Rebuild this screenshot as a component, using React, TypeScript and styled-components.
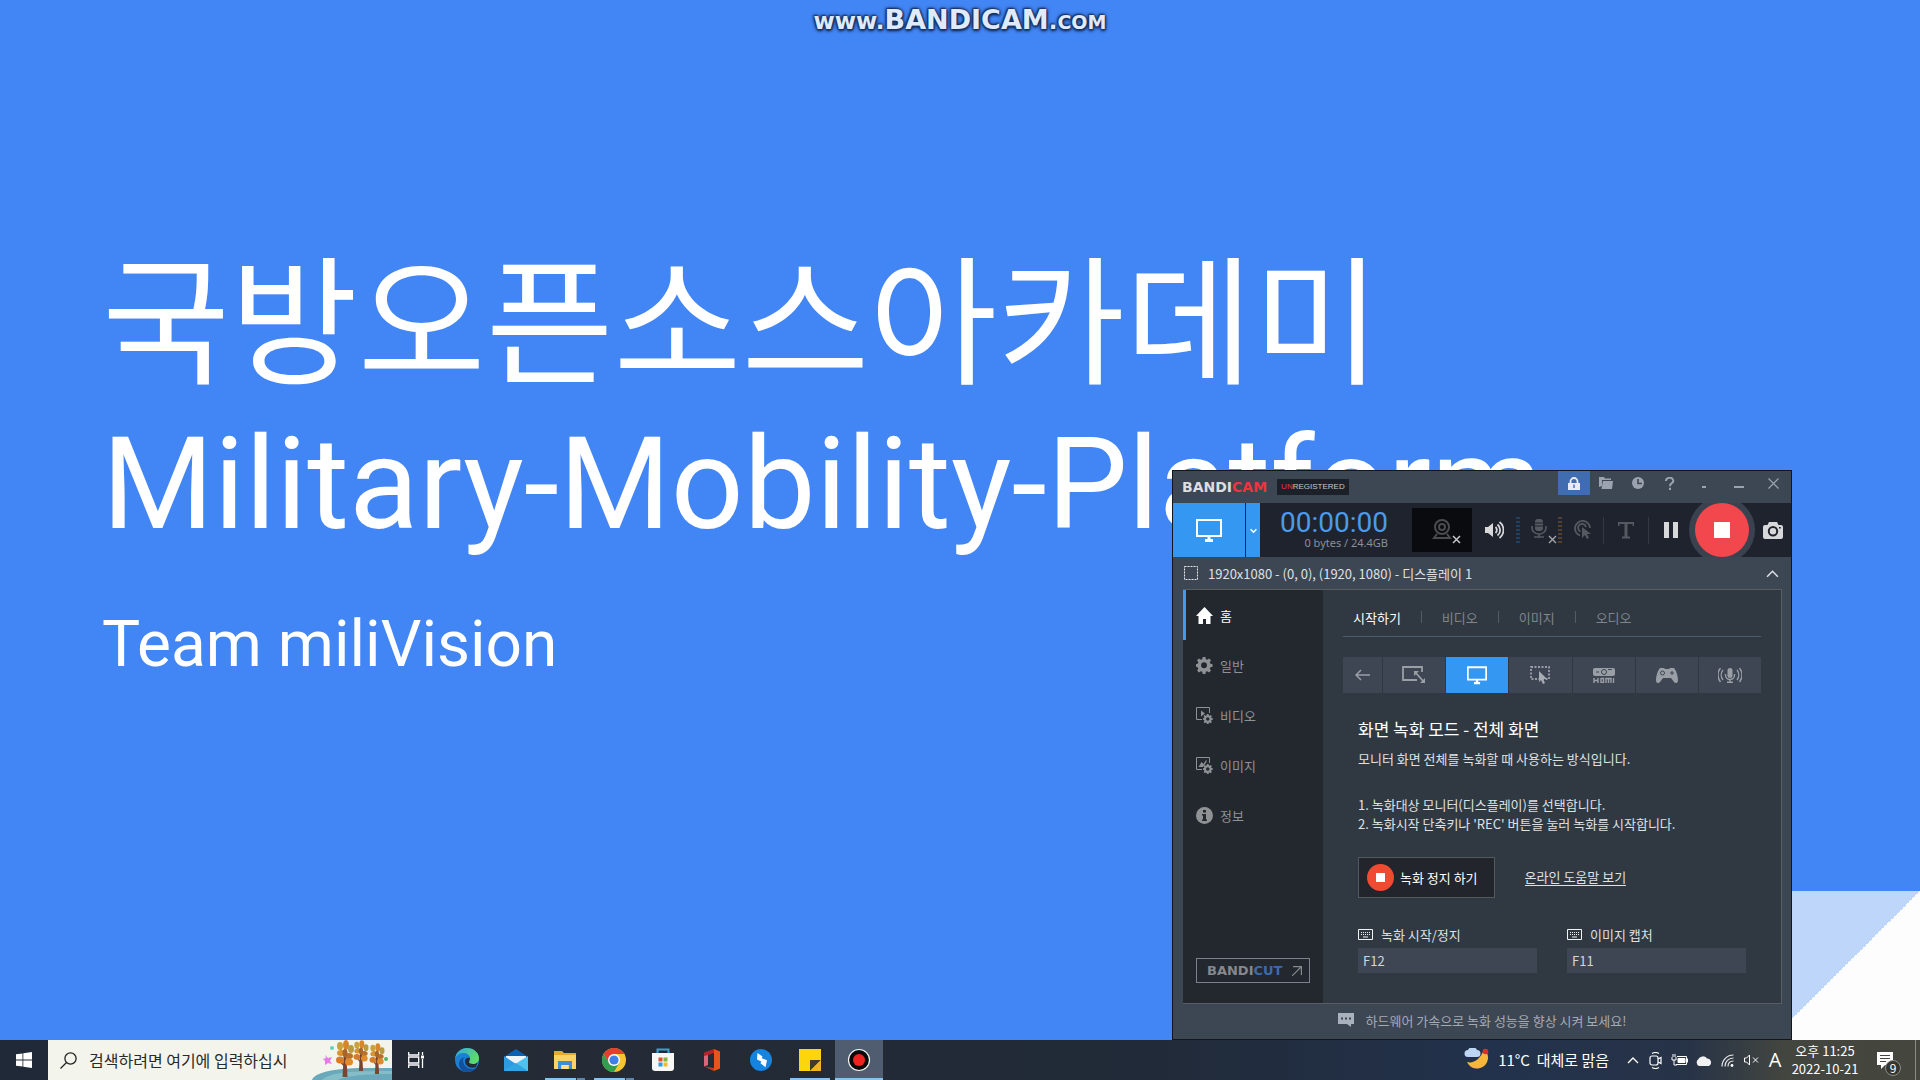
import React from 'react';
import styled, { createGlobalStyle, css } from 'styled-components';

const GlobalStyle = createGlobalStyle`
  * { box-sizing: border-box; }
  html, body { margin: 0; padding: 0; }
  body { background: #4285f4; overflow: hidden; }
  h1, h2, p, ul, ol { margin: 0; padding: 0; font-weight: 400; list-style: none; }
  button, input { font: inherit; color: inherit; border: 0; padding: 0; background: none; }
  svg { display: block; flex: none; }
`;

const koFont = `"Noto Sans CJK KR", "Open Sans", sans-serif`;
const wideFont = `"DejaVu Sans", sans-serif`;

const Screen = styled.div`
  display: flex;
  flex-direction: column;
  height: 100vh;
  font-family: ${koFont};
  font-size: 13px;
  line-height: 19px;
`;

/* ---------- desktop and slide ---------- */

const Desktop = styled.main`
  position: relative;
  flex: 1;
  min-height: 0;
  overflow: hidden;
  background: #4285f4;
`;

const Watermark = styled.div`
  position: absolute;
  top: 4px;
  left: 0;
  right: 0;
  text-align: center;
  font: bold 23px/32px ${wideFont};
  color: #dfeafc;
  text-shadow: 0 0 2px #16305f, 1px 1px 2px #16305f, -1px -1px 2px #16305f, 0 2px 3px #16305f, 0 0 4px #16305f;
`;

const WatermarkName = styled.span`
  font-size: 27px;
`;

const WatermarkDomain = styled.span`
  font-size: 19px;
  text-transform: uppercase;
`;

const Slide = styled.section`
  padding: 216px 0 0 102px;
  color: #fff;
  white-space: nowrap;
`;

const SlideTitle = styled.h1`
  font: 400 128px/150px Roboto, sans-serif;
`;

const TitleKorean = styled.span`
  display: block;
  font: 400 139px/193px ${koFont};
`;

const SlideTeam = styled.p`
  margin-top: 48px;
  font: 400 64px/76px Roboto, sans-serif;
`;

const PageFold = styled.div`
  position: absolute;
  right: 0;
  bottom: -40px;
  width: 189px;
  height: 189px;
  background: linear-gradient(135deg, #bfd6fb 50%, #fdfdfe 50%);
`;

/* ---------- recorder window ---------- */

const Window = styled.section`
  position: absolute;
  right: 128px;
  bottom: 0;
  width: 620px;
  display: flex;
  flex-direction: column;
  border: 1px solid #11161f;
  background: #3d4653;
  color: #dfe1e3;
`;

const TitleBar = styled.header`
  display: flex;
  align-items: center;
  height: 32px;
  padding-left: 9px;
`;

const Brand = styled.span<{ $size: number; $color: string }>`
  font: bold ${p => p.$size}px/20px ${wideFont};
  color: ${p => p.$color};
`;

const Accent = styled.span<{ $color: string }>`
  color: ${p => p.$color};
`;

const Unregistered = styled.span`
  margin-left: 10px;
  padding: 0 4px;
  background: #1c2029;
  color: #c6c8ca;
  font: 8px/16px "Liberation Sans", sans-serif;
`;

const TitleButtons = styled.div`
  display: flex;
  align-self: flex-start;
  margin-left: auto;
`;

const TitleButton = styled.button<{ $active?: boolean; $wide?: boolean }>`
  display: grid;
  place-items: center;
  width: ${p => (p.$wide ? 35 : 32)}px;
  height: 24px;
  color: #9ba4ae;
  background: ${p => (p.$active ? '#3f6daf' : 'transparent')};
`;

const Toolbar = styled.div`
  display: flex;
  height: 54px;
  background: #1f232d;
`;

const ModeButton = styled.button<{ $arrow?: boolean }>`
  display: grid;
  place-items: center;
  width: ${p => (p.$arrow ? 14 : 72)}px;
  margin-right: ${p => (p.$arrow ? 0 : 1)}px;
  background: #3497f2;
  color: #fff;
`;

const Timer = styled.div`
  width: 128px;
  padding-top: 8px;
  text-align: right;
`;

const Clock = styled.div`
  font: 400 28px/24px Roboto, sans-serif;
  color: #4a9bea;
`;

const FileSize = styled.div`
  font: 11px/16px "Noto Sans", sans-serif;
  color: #8b8f97;
`;

const Tool = styled.button<{ $w: number; $dim?: boolean }>`
  display: grid;
  place-items: center;
  width: ${p => p.$w}px;
  color: ${p => (p.$dim ? '#555a62' : '#d6d8da')};
`;

const PauseTool = styled(Tool)`
  padding-left: 4px;
`;

const Webcam = styled(Tool)`
  height: 44px;
  margin: 5px 0 5px 24px;
  background: #0a0b0e;
`;

const Level = styled.span<{ $color: string }>`
  width: 4px;
  height: 27px;
  margin-top: 14px;
  background: repeating-linear-gradient(${p => p.$color} 0 2px, transparent 2px 4px);
`;

const ToolDivider = styled.span`
  width: 1px;
  height: 27px;
  margin-top: 14px;
  background: #343944;
`;

const SourceRow = styled.div`
  display: flex;
  align-items: center;
  height: 32px;
  padding: 0 12px 0 11px;
  gap: 10px;
`;

const SourceText = styled.span`
  flex: 1;
  font-size: 13px;
`;

const Body = styled.div`
  display: flex;
  margin: 0 9px 0 10px;
  height: 415px;
  border: solid #5a5e60;
  border-width: 1px 1px 1px 0;
`;

const Sidebar = styled.nav`
  display: flex;
  flex-direction: column;
  justify-content: space-between;
  width: 140px;
  background: #23272e;
  padding-bottom: 20px;
`;

const SideItem = styled.button<{ $active?: boolean }>`
  display: flex;
  align-items: center;
  gap: 7px;
  width: 100%;
  height: 50px;
  padding-left: 10px;
  border-left: 3px solid ${p => (p.$active ? '#3f9bf0' : 'transparent')};
  color: ${p => (p.$active ? '#fff' : '#8f9295')};
`;

const Bandicut = styled.a`
  display: flex;
  align-items: center;
  justify-content: space-between;
  height: 25px;
  margin: 0 13px;
  padding: 0 7px 0 10px;
  border: 1px solid #7e8189;
  color: #85888f;
  text-decoration: none;
`;

const Content = styled.div`
  flex: 1;
  padding: 8px 20px 0;
  background: #303842;
`;

const Tabs = styled.div`
  display: flex;
  align-items: center;
  height: 39px;
  padding-left: 10px;
  border-bottom: 1px solid #4d5b70;
`;

const Tab = styled.button<{ $active?: boolean }>`
  display: flex;
  align-items: center;
  color: ${p => (p.$active ? '#fff' : '#7f858b')};
  &:not(:first-child)::before {
    content: '';
    width: 1px;
    height: 12px;
    margin: 0 20px;
    background: #525b66;
  }
`;

const Modes = styled.div`
  display: flex;
  gap: 1px;
  height: 36px;
  margin-top: 20px;
`;

const Mode = styled.button<{ $active?: boolean; $back?: boolean }>`
  display: grid;
  place-items: center;
  ${p => (p.$back ? css`width: 39px;` : css`flex: 1;`)}
  background: ${p => (p.$active ? '#3497f2' : '#3e4654')};
  color: ${p => (p.$active ? '#fff' : '#9a9fa6')};
`;

const Copy = styled.div`
  padding: 24px 15px 0;
`;

const ModeTitle = styled.h2`
  font-size: 17px;
  line-height: 24px;
  color: #fff;
`;

const Description = styled.p`
  margin-top: 8px;
`;

const Steps = styled.ol`
  margin-top: 27px;
`;

const Actions = styled.div`
  display: flex;
  align-items: center;
  gap: 30px;
  margin-top: 24px;
`;

const StopButton = styled.button`
  display: flex;
  align-items: center;
  gap: 6px;
  height: 41px;
  padding: 0 16px 0 8px;
  border: 1px solid #515b5c;
  background: #22262c;
  color: #fff;
`;

const HelpLink = styled.a`
  color: #dfe1e3;
  text-decoration: none;
  border-bottom: 1px solid #dfe1e3;
  line-height: 16px;
`;

const Hotkeys = styled.div`
  display: grid;
  grid-template-columns: 1fr 1fr;
  gap: 30px;
  margin-top: 26px;
`;

const HotkeyLabel = styled.label`
  display: flex;
  align-items: center;
  gap: 8px;
  height: 20px;
`;

const HotkeyInput = styled.input`
  width: 100%;
  height: 25px;
  margin-top: 4px;
  padding: 0 5px;
  background: #3e4654;
  color: #d3d6d9;
  outline: none;
`;

const Tip = styled.footer`
  display: flex;
  align-items: center;
  justify-content: center;
  gap: 12px;
  height: 35px;
  padding-bottom: 3px;
  color: #a4aab2;
`;

/* ---------- taskbar ---------- */

const Taskbar = styled.footer`
  display: flex;
  height: 40px;
  background: linear-gradient(90deg, #1f2937 0%, #242b35 25%, #212a38 60%, #22324c 78%, #273347 88%, #43463f 93%, #45463e 100%);
  color: #fff;
`;

const StartButton = styled.button`
  display: grid;
  place-items: center;
  width: 48px;
`;

const Search = styled.label`
  display: flex;
  align-items: center;
  width: 344px;
  padding-left: 12px;
  gap: 12px;
  background: #f3f4ec;
  color: #1e1e1e;
`;

const SearchInput = styled.input`
  flex: 1;
  min-width: 0;
  font-size: 16px;
  outline: none;
  &::placeholder { color: #2a2a2a; opacity: 1; }
`;

const Apps = styled.div`
  display: flex;
  gap: 1px;
  margin-left: 3px;
`;

const AppButton = styled.button<{ $state?: 'open' | 'stack' | 'active' }>`
  display: grid;
  place-items: center;
  width: 48px;
  border-bottom: 2px solid transparent;
  border-top: 2px solid transparent;
  ${p => p.$state === 'active' && css`
    background: #505d70;
    border-color: #505d70 transparent #86c3ee;
  `}
  ${p => p.$state === 'open' && css`
    background: linear-gradient(#86c3ee, #86c3ee) 4px 100% / 40px 2px no-repeat border-box;
  `}
  ${p => p.$state === 'stack' && css`
    background:
      linear-gradient(#86c3ee, #86c3ee) 4px 100% / 31px 2px no-repeat border-box,
      linear-gradient(#5f86a8, #5f86a8) 36px 100% / 8px 2px no-repeat border-box;
  `}
`;

const Tray = styled.div`
  display: flex;
  align-items: center;
  margin-left: auto;
  padding-right: 8px;
  border-right: 1px solid #8a8b86;
  margin-right: 4px;
`;

const Weather = styled.button`
  display: flex;
  align-items: center;
  gap: 8px;
  margin-right: 14px;
  font-size: 15px;
  line-height: 20px;
  white-space: nowrap;
`;

const TrayButton = styled.button<{ $w?: number }>`
  display: grid;
  place-items: center;
  width: ${p => p.$w ?? 24}px;
  height: 40px;
`;

const Ime = styled.span`
  font: 20px/24px "Open Sans", sans-serif;
`;

const DateTime = styled.time`
  width: 76px;
  text-align: center;
  font-size: 13px;
  line-height: 18px;
`;

const Notifications = styled.button`
  position: relative;
  display: grid;
  place-items: center;
  width: 44px;
  height: 40px;
`;

const Badge = styled.span`
  position: absolute;
  left: 22px;
  top: 20px;
  width: 16px;
  height: 16px;
  border-radius: 8px;
  border: 1px solid #8d8e8a;
  background: #34352f;
  font-size: 12px;
  line-height: 14px;
`;

/* ---------- icons ---------- */

const Monitor = ({ w, sw = 2 }: { w: number; sw?: number }) => (
  <svg width={w} height={w} viewBox="0 0 26 26" fill="none" stroke="#fff" strokeWidth={sw}>
    <path d="M1 3h24v16H1z" />
    <path d="M9 23.500h8M13 19v4" strokeWidth="3" />
  </svg>
);

const Chevron = ({ up, w = 12, sw = 1.4 }: { up?: boolean; w?: number; sw?: number }) => (
  <svg width={w} height={w} viewBox="0 0 12 12" fill="none" stroke="currentColor" strokeWidth={sw}>
    <path d={up ? 'M1 9l5-5 5 5' : 'M1 4l5 5 5-5'} />
  </svg>
);

const StopDisc = () => (
  <svg width="27" height="27" viewBox="0 0 54 54">
    <circle cx="27" cy="27" r="27" fill="#f04a32" />
    <path d="M18 18h18v18H18z" fill="#fff" />
  </svg>
);

const RecIcon = () => (
  <svg width="66" height="54" viewBox="0 0 66 54">
    <circle cx="33" cy="27" r="33" fill="#3a4250" />
    <circle cx="33" cy="27" r="27" fill="#f2474c" />
    <path d="M25 19h16v16H25z" fill="#fff" />
  </svg>
);

const gearPath = 'M7.500 0h3l.5 2.400 1.600.7L14.700 1.700l2 2-1.300 2.200.7 1.600 2.400.5v3l-2.400.5-.7 1.600 1.300 2.100-2 2.100-2.100-1.400-1.600.7-.5 2.400h-3L7 16.600l-1.600-.7-2.100 1.400-2.100-2.100 1.400-2.100-.7-1.600L0 11V8l1.900-.5.7-1.600L1.200 3.700l2.100-2 2.100 1.400L7 2.400zM9 6a3.300 3.300 0 1 0 0 6.600A3.300 3.300 0 0 0 9 6z';

const Gear = () => (
  <svg width="17" height="17" viewBox="0 0 19 19" fill="currentColor" fillRule="evenodd">
    <path d={gearPath} />
  </svg>
);

const HomeIcon = () => (
  <svg width="17" height="17" viewBox="0 0 17 17" fill="currentColor">
    <path d="M8.500 0L17 9h-2.500v8H10v-5H7v5H2.500V9H0z" />
  </svg>
);

const MediaGear = ({ image }: { image?: boolean }) => (
  <svg width="17" height="17" viewBox="0 0 17 17" fill="currentColor">
    <path d="M6 12.500H.5V.5h13V6" fill="none" stroke="currentColor" />
    {image ? <path d="M2.500 10l3-5 2 2 3-4.500V5L7 10z" /> : <path d="M5 3.500L9 6.500l-4 3z" />}
    <g transform="translate(7 7) scale(.53)" fillRule="evenodd"><path d={gearPath} /></g>
  </svg>
);

const InfoIcon = () => (
  <svg width="17" height="17" viewBox="0 0 17 17">
    <circle cx="8.500" cy="8.500" r="8.500" fill="currentColor" />
    <path d="M7 3h3v2.500H7zM6 7h4v5.500h1V14H6v-1.500h1v-4H6z" fill="#23272e" />
  </svg>
);

const WebcamIcon = () => (
  <svg width="38" height="28" viewBox="0 0 38 28" fill="none" stroke="#4b4c4e" strokeWidth="2">
    <circle cx="19" cy="11" r="7" />
    <circle cx="19" cy="11" r="3" />
    <path d="M14 18l-3 4h16l-3-4" />
    <path d="M30 20l7 7M37 20l-7 7" stroke="#c4c6c8" strokeWidth="1.500" />
  </svg>
);

const SpeakerIcon = () => (
  <svg width="20" height="18" viewBox="0 0 20 18" fill="none" stroke="currentColor" strokeWidth="1.800">
    <path d="M1 6h3l5-4v14l-5-4H1z" fill="currentColor" stroke="none" />
    <path d="M11.500 6a4 4 0 0 1 0 6M13.500 3.500a7 7 0 0 1 0 11M15.500 1a10 10 0 0 1 0 16" />
  </svg>
);

const MicIcon = () => (
  <svg width="36" height="28" viewBox="-8 -2 36 28" fill="none" stroke="currentColor" strokeWidth="1.600">
    <rect x="6" y="1" width="8" height="12" rx="3" fill="currentColor" stroke="none" />
    <path d="M6 5h8M6 8h8" stroke="#1f232d" strokeWidth="1" />
    <path d="M3 8v2a7 6 0 0 0 14 0V8M10 16v3M5 19h10" />
    <path d="M20 18l7 7M27 18l-7 7" stroke="#a3a7ab" strokeWidth="1.400" />
  </svg>
);

const ClickIcon = () => (
  <svg width="18" height="20" viewBox="0 0 18 20" fill="none" stroke="currentColor" strokeWidth="1.800">
    <path d="M6 15.500A7.500 7.500 0 1 1 16 8M6.500 11.500A4 4 0 1 1 12 7" />
    <path d="M8 7l9 7h-4l2 4-2 1-2-4-3 3z" fill="currentColor" stroke="none" />
  </svg>
);

const TextIcon = () => (
  <svg width="16" height="18" viewBox="0 0 16 18" fill="none" stroke="currentColor">
    <path d="M0 2h16M4 16.500h8" strokeWidth="2" />
    <path d="M8 1v16" strokeWidth="3" />
    <path d="M.7 1v4M15.300 1v4" strokeWidth="1.400" />
  </svg>
);

const PauseIcon = () => (
  <svg width="14" height="16" viewBox="0 0 14 16" fill="currentColor"><path d="M0 0h5v16H0zM9 0h5v16H9z" /></svg>
);

const CameraIcon = () => (
  <svg width="20" height="17" viewBox="0 0 20 17" fillRule="evenodd" fill="currentColor">
    <path d="M6 0h8l1.500 3H18a2 2 0 0 1 2 2v10a2 2 0 0 1-2 2H2a2 2 0 0 1-2-2V5a2 2 0 0 1 2-2h2.500zM10 4a5.200 5.200 0 1 0 0 10.400A5.200 5.200 0 0 0 10 4zm0 2a3.200 3.200 0 1 1 0 6.400A3.200 3.200 0 0 1 10 6zM16 5v1.500h1.800V5z" />
  </svg>
);

const LockIcon = () => (
  <svg width="12" height="13" viewBox="0 0 12 13" fill="#e8ecf2">
    <path d="M0 6h12v7H0z" /><path d="M2.500 6V4.500a3.500 3.500 0 0 1 7 0V6" fill="none" stroke="#e8ecf2" strokeWidth="1.800" />
    <path d="M5.300 7.500h1.400v3.500H5.300z" fill="#3f6daf" />
  </svg>
);

const FolderIcon = () => (
  <svg width="14" height="12" viewBox="0 0 14 12" fill="currentColor">
    <path d="M0 0h5l1 1.500h6V3H3v6L0 10z" /><path d="M4 4h10l-1 8H2.500z" />
  </svg>
);

const ClockIcon = () => (
  <svg width="12" height="12" viewBox="0 0 12 12">
    <circle cx="6" cy="6" r="6" fill="currentColor" /><path d="M6 2v4.500h4" fill="none" stroke="#3d4653" strokeWidth="1.600" />
  </svg>
);

const HelpIcon = () => (
  <svg width="10" height="13" viewBox="0 0 10 13" fill="none" stroke="currentColor" strokeWidth="2">
    <path d="M1 4a3.600 3 0 1 1 5.500 2.300C5 7.300 5 8 5 9.200M5 10.800V13" />
  </svg>
);

const BarIcon = ({ w }: { w: number }) => (
  <svg width={w} height="12" viewBox={`0 0 ${w} 12`} fill="currentColor"><path d={`M0 9h${w}v2H0z`} /></svg>
);

const CloseIcon = () => (
  <svg width="11" height="11" viewBox="0 0 11 11" stroke="currentColor" strokeWidth="1.200"><path d="M.5.5l10 10M10.500.5l-10 10" /></svg>
);

const SelectionIcon = () => (
  <svg width="14" height="14" viewBox="0 0 14 14" fill="none" stroke="#e6e8ea" strokeDasharray="2 1"><path d="M.5.5h13v13H.5z" /></svg>
);

const ArrowBack = () => (
  <svg width="15" height="12" viewBox="0 0 15 12" fill="none" stroke="currentColor" strokeWidth="1.500"><path d="M15 6H1M6 1L1 6l5 5" /></svg>
);

const ResizeRect = () => (
  <svg width="24" height="18" viewBox="0 0 24 18" fill="none" stroke="currentColor" strokeWidth="1.800">
    <path d="M15 14H1V1h19v5" /><path d="M13 6l9 10" /><path d="M12 5h5l-5 5zM23 17v-5l-5 5z" fill="currentColor" stroke="none" />
  </svg>
);

const RectCursor = () => (
  <svg width="20" height="18" viewBox="0 0 20 18" fill="none" stroke="currentColor">
    <path d="M1 1h18v12H1z" strokeWidth="1.800" strokeDasharray="2 1.500" />
    <path d="M9 5l8 8h-4l2 4-2 1-2-4-2 2z" fill="#a9adb3" stroke="none" />
  </svg>
);

const HdmiIcon = () => (
  <svg width="22" height="15" viewBox="0 0 22 15" fill="currentColor">
    <path d="M2 0h18a2 2 0 0 1 2 2v4a2 2 0 0 1-2 2H2a2 2 0 0 1-2-2V2a2 2 0 0 1 2-2z" />
    <circle cx="11" cy="4" r="2.500" fill="none" stroke="#3e4654" /><path d="M15 1.500h4M3 4h3" stroke="#3e4654" />
    <path d="M1 10v5M5 10v5M1 12.500h4M8 10v5M8 10.500h2.500v4H8M13 15v-4.500h5V15M15.500 10.500V15M20.500 10v5" fill="none" stroke="currentColor" strokeWidth="1.400" />
  </svg>
);

const GamepadIcon = () => (
  <svg width="22" height="15" viewBox="0 0 22 15" fill="currentColor">
    <path d="M4 0h4l1 1h4l1-1h4c2 2 4 8 4 12 0 3-2 4-4 2l-3-4H7l-3 4c-2 2-4 1-4-2C0 8 2 2 4 0z" />
    <circle cx="6.500" cy="5" r="2" fill="none" stroke="#3e4654" /><path d="M14 5h4M16 3v4" stroke="#3e4654" />
  </svg>
);

const AudioIcon = () => (
  <svg width="24" height="15" viewBox="0 0 24 15" fill="none" stroke="currentColor" strokeWidth="1.400">
    <rect x="9.500" y="0" width="5" height="10" rx="2.500" fill="currentColor" stroke="none" />
    <path d="M7.500 6v1a4.500 4.500 0 0 0 9 0V6M12 11.500V14M9 14.300h6M5 2a8 8 0 0 0 0 10M19 2a8 8 0 0 1 0 10M2.500 0a11 11 0 0 0 0 14M21.500 0a11 11 0 0 1 0 14" />
  </svg>
);

const KeyboardIcon = () => (
  <svg width="15" height="11" viewBox="0 0 15 11" fill="none" stroke="#f1f2f3">
    <path d="M.5.5h14v10H.5z" /><path d="M3 3.500h10M3 5.500h10" strokeDasharray="1 1" /><path d="M5 8h5" />
  </svg>
);

const OutArrow = () => (
  <svg width="10" height="10" viewBox="0 0 10 10" fill="none" stroke="currentColor" strokeWidth="1.200"><path d="M0 10l9-9M1 .6h8.400V9" /></svg>
);

const ChatIcon = () => (
  <svg width="16" height="14" viewBox="0 0 16 14"><path d="M0 0h16v11h-3v3l-4-3H0z" fill="#a9b2bc" /><path d="M3 5.500h2M7 5.500h2M11 5.500h2" stroke="#3d4653" strokeWidth="2" /></svg>
);

const WindowsLogo = () => (
  <svg width="16" height="16" viewBox="0 0 16 16" fill="#fff"><path d="M0 2.300L6.500 1.400V7.600H0zM7.300 1.300L16 0v7.600H7.300zM0 8.400h6.500v6.200L0 13.700zM7.300 8.400H16V16l-8.700-1.200z" /></svg>
);

const SearchIcon = () => (
  <svg width="17" height="17" viewBox="0 0 17 17" fill="none" stroke="#222" strokeWidth="1.300"><circle cx="10.500" cy="6.500" r="5.600" /><path d="M6.500 10.500L.5 16.500" /></svg>
);

const Tree = ({ x, y, h }: { x: number; y: number; h: number }) => (
  <g transform={`translate(${x} ${y}) scale(${h / 36})`}>
    <path d="M-1.200 12h2.400L2.500 36h-5z" fill="#7a4530" />
    <path d="M0 14l-6-8M0 22l6-8M0 26l-6-7" stroke="#7a4530" strokeWidth="1.200" />
    <ellipse cx="-5" cy="5" rx="3" ry="4" fill="#c9a23c" /><ellipse cx="1" cy="4" rx="3" ry="5" fill="#d8862c" />
    <ellipse cx="6" cy="8" rx="3" ry="4" fill="#b79a42" /><ellipse cx="-4" cy="12" rx="4" ry="3" fill="#d9942f" />
    <ellipse cx="4" cy="15" rx="4" ry="3" fill="#b8702a" /><ellipse cx="-5" cy="19" rx="4" ry="3.500" fill="#d77b25" />
    <ellipse cx="4" cy="21" rx="4" ry="3.500" fill="#e08b2b" /><ellipse cx="0" cy="12" rx="2.500" ry="4" fill="#a9652a" />
  </g>
);

const Autumn = () => (
  <svg width="80" height="40" viewBox="0 0 80 40">
    <path d="M0 40c2-8 26-12 50-12h30v12z" fill="#69a9bb" />
    <path d="M10 40c8-8 30-9 70-9v3c-30 0-46 2-54 6z" fill="#84bfc9" />
    <Tree x={33} y={1} h={36} /><Tree x={49} y={1} h={30} /><Tree x={65} y={4} h={30} />
    <path d="M13 15l3 3 4-1-2 4 2 3-4-1-3 2v-4l-2-2 3-1z" fill="#e77bea" />
    <circle cx="20" cy="8" r="2" fill="#5fd3b8" /><circle cx="74" cy="19" r="2" fill="#55b66b" />
  </svg>
);

const TaskView = () => (
  <svg width="17" height="16" viewBox="0 0 17 16" fill="none" stroke="#fff" strokeWidth="1.300">
    <path d="M.7 0v3h10V0M.7 16v-3h10v3M.7 5h10v6H.7zM14.500 0v3M14.500 7v9" /><path d="M13 3.500h3v3h-3z" fill="#fff" stroke="none" />
  </svg>
);

const Edge = () => (
  <svg width="24" height="24" viewBox="0 0 24 24">
    <defs>
      <linearGradient id="edgeTop" x1="0" y1="0" x2="1" y2=".4"><stop offset="0" stopColor="#2fa8e8" /><stop offset="1" stopColor="#5fdb6b" /></linearGradient>
    </defs>
    <circle cx="12" cy="12" r="12" fill="#1b7fd4" />
    <path d="M0 11C1 4 6 0 12 0c7 0 12 5 12 10 0 4-3 6-6 6-3 0-4-1-4-2s1-2 1-4c0-3-3-5-7-5-4 0-7 3-8 6z" fill="url(#edgeTop)" />
    <path d="M8 12c0 6 5 9 9 9 2 0 4-.6 5-1.500C20 22 16 24 12 24 6 24 4 19 4 16c0-4 3-6.500 6-6.500-1 .5-2 1.500-2 2.500z" fill="#124f9c" />
    <path d="M15 10c0 2-1 3-1 4s1 2 4 2c2 0 3-.5 4.500-1.500L21 19c-6 2-11-1-11-6 0-2 2-4 5-3z" fill="#242b35" />
  </svg>
);

const Mail = () => (
  <svg width="24" height="24" viewBox="0 0 24 24">
    <path d="M0 9L12 1l12 8v3H0z" fill="#0b62b5" /><path d="M2 8h20v10H2z" fill="#eef4fa" />
    <path d="M0 8l12 8v7H0z" fill="#2b9be3" /><path d="M24 8L0 23h24z" fill="#4cc3f1" /><path d="M0 23l12-8 12 8z" fill="#2ea6e6" />
  </svg>
);

const Explorer = () => (
  <svg width="24" height="24" viewBox="0 0 24 24">
    <path d="M1 3h8l2 2h12v16H1z" fill="#e9a92f" /><path d="M1 7h22v14H1z" fill="#fbd266" />
    <path d="M5 13h14v8h-3v-4H8v4H5z" fill="#3b8fd6" /><path d="M9 17h6v4H9z" fill="#fbe08e" />
  </svg>
);

const Chrome = () => (
  <svg width="24" height="24" viewBox="0 0 24 24">
    <circle cx="12" cy="12" r="12" fill="#f7c62f" />
    <path d="M1.600 6A12 12 0 0 1 22.400 6H12L6.800 15z" fill="#e2402f" />
    <path d="M1.600 6A12 12 0 0 0 12 24l5.200-9L12 18l-5.200-3z" fill="#2f9e4f" />
    <circle cx="12" cy="12" r="6" fill="#fff" /><circle cx="12" cy="12" r="4.600" fill="#3f7fe8" />
  </svg>
);

const Store = () => (
  <svg width="24" height="24" viewBox="0 0 24 24">
    <path d="M6.500 6V1.500h11V6" fill="none" stroke="#35a3d6" strokeWidth="2" />
    <path d="M1 5h22v15a3 3 0 0 1-3 3H4a3 3 0 0 1-3-3z" fill="#f7f7f5" />
    <path d="M7.500 9.500h4v4h-4z" fill="#e4502e" /><path d="M12.500 9.500h4v4h-4z" fill="#7db93b" />
    <path d="M7.500 14.500h4v4h-4z" fill="#2b9be3" /><path d="M12.500 14.500h4v4h-4z" fill="#f3b92c" />
  </svg>
);

const Office = () => (
  <svg width="20" height="24" viewBox="0 0 20 24">
    <path d="M12 1l6 2.500v17L12 23z" fill="#e8541f" />
    <path d="M12 1L2 4.500v14L6 17V7l6-2z" fill="#b5242b" /><path d="M2 8v10.500L6 17V7z" fill="#d9667c" /><path d="M2 18.500L12 23v-3z" fill="#c7392c" />
  </svg>
);

const Bolt = () => (
  <svg width="24" height="24" viewBox="0 0 24 24"><circle cx="12" cy="12" r="11" fill="#1584e0" /><path d="M8.500 5l5 3.500-.8 1.700 5.300 2-1.500 7-5-4 .8-1.700-4.300-2z" fill="#fff" /></svg>
);

const Sticky = () => (
  <svg width="24" height="24" viewBox="0 0 24 24"><path d="M1 1h22v22H1z" fill="#fbd60d" /><path d="M12 23V12h11z" fill="#3f3a2c" /><path d="M12 23l11-11v11z" fill="#f0b51c" /></svg>
);

const Recorder = () => (
  <svg width="24" height="24" viewBox="0 0 24 24"><circle cx="12" cy="12" r="10.500" fill="#0a0a0a" stroke="#f4f4f4" strokeWidth="1.200" /><circle cx="12" cy="12" r="6" fill="#ee2320" /></svg>
);

const WeatherIcon = () => (
  <svg width="26" height="24" viewBox="0 0 26 24">
    <path d="M20 1a11 11 0 1 1-17 13c6 2 14-3 17-13z" fill="#f6b53b" />
    <path d="M4 9a3.500 3.500 0 0 1 0-7 5 5 0 0 1 9 0 3.500 3.500 0 0 1 0 7z" fill="#bcd6f4" />
    <circle cx="21.500" cy="3.500" r="2.800" fill="#d2322a" />
  </svg>
);

const MeetIcon = () => (
  <svg width="13" height="17" viewBox="0 0 13 17" fill="none" stroke="#fff" strokeWidth="1.200">
    <rect x="1" y="4" width="8" height="9" rx="2" /><path d="M9 7l3-1.500v6L9 10M3 1.500c2-1.200 5-1.200 7 0M3 15.500c2 1.200 5 1.200 7 0" />
  </svg>
);

const BatteryIcon = () => (
  <svg width="17" height="12" viewBox="0 0 17 12" fill="none" stroke="#fff">
    <path d="M6 2.500h9.500v8H5" /><path d="M7 4.500h7v4H7zM16 5h1v3h-1z" fill="#fff" /><path d="M1 3v3h4V3M2 0v3M4 0v3M3 6v5h3" />
  </svg>
);

const CloudIcon = () => (
  <svg width="17" height="11" viewBox="0 0 17 11"><path d="M4 11a4 4 0 0 1-.5-7A5 5 0 0 1 12 3.500 4 4 0 0 1 14 11z" fill="#f2f2f2" /></svg>
);

const WifiIcon = () => (
  <svg width="13" height="13" viewBox="0 0 13 13" fill="none" stroke="#e9e9e9" strokeWidth="1.200">
    <path d="M1 12.500C1 6 6 1 12.500 1M4 12.500c0-5 3.500-8.500 8.500-8.500M7 12.500C7 9 9 7 12.500 7" /><circle cx="11" cy="11.500" r="1.400" fill="#fff" stroke="none" />
  </svg>
);

const MuteIcon = () => (
  <svg width="15" height="12" viewBox="0 0 15 12" fill="none" stroke="#fff"><path d="M.5 4h2l3-3v10l-3-3h-2zM9 3.500l5 5M14 3.500l-5 5" /></svg>
);

const NoteIcon = () => (
  <svg width="16" height="17" viewBox="0 0 16 17"><path d="M0 0h16v13H8l-4 4v-4H0z" fill="#fff" /><path d="M3 3.500h10M3 6.500h10M3 9.500h6" stroke="#45463e" /></svg>
);

/* ---------- page ---------- */

const sideItems = [
  { label: '홈', icon: <HomeIcon /> },
  { label: '일반', icon: <Gear /> },
  { label: '비디오', icon: <MediaGear /> },
  { label: '이미지', icon: <MediaGear image /> },
  { label: '정보', icon: <InfoIcon /> },
];

const tabs = ['시작하기', '비디오', '이미지', '오디오'];

const modes = [
  { name: '사각형 영역', icon: <ResizeRect /> },
  { name: '전체 화면', icon: <Monitor w={20} sw={2.5} />, active: true },
  { name: '마우스 주변', icon: <RectCursor /> },
  { name: '장치 녹화', icon: <HdmiIcon /> },
  { name: '게임 녹화', icon: <GamepadIcon /> },
  { name: '소리 녹음', icon: <AudioIcon /> },
];

const apps: { name: string; icon: React.ReactNode; state?: 'open' | 'stack' | 'active' }[] = [
  { name: 'Edge', icon: <Edge /> },
  { name: 'Mail', icon: <Mail /> },
  { name: 'Explorer', icon: <Explorer />, state: 'stack' },
  { name: 'Chrome', icon: <Chrome />, state: 'stack' },
  { name: 'Store', icon: <Store /> },
  { name: 'Office', icon: <Office /> },
  { name: 'Bolt', icon: <Bolt /> },
  { name: 'Sticky Notes', icon: <Sticky />, state: 'open' },
  { name: 'Bandicam', icon: <Recorder />, state: 'active' },
];

const RecorderWindow = () => (
  <Window>
    <TitleBar>
      <Brand $size={14} $color="#dcdee0">BANDI<Accent $color="#f0343f">CAM</Accent></Brand>
      <Unregistered><Accent $color="#f0343f">UN</Accent>REGISTERED</Unregistered>
      <TitleButtons>
        <TitleButton $active aria-label="잠금"><LockIcon /></TitleButton>
        <TitleButton aria-label="폴더"><FolderIcon /></TitleButton>
        <TitleButton aria-label="예약"><ClockIcon /></TitleButton>
        <TitleButton aria-label="도움말"><HelpIcon /></TitleButton>
        <TitleButton $wide aria-label="트레이"><BarIcon w={4} /></TitleButton>
        <TitleButton $wide aria-label="최소화"><BarIcon w={10} /></TitleButton>
        <TitleButton $wide aria-label="닫기"><CloseIcon /></TitleButton>
      </TitleButtons>
    </TitleBar>
    <Toolbar>
      <ModeButton aria-label="전체 화면"><Monitor w={26} /></ModeButton>
      <ModeButton $arrow aria-label="모드 선택"><Chevron w={7} sw={2.6} /></ModeButton>
      <Timer>
        <Clock>00:00:00</Clock>
        <FileSize>0 bytes / 24.4GB</FileSize>
      </Timer>
      <Webcam $w={60} aria-label="웹캠"><WebcamIcon /></Webcam>
      <Tool $w={44} aria-label="스피커"><SpeakerIcon /></Tool>
      <Level $color="#22405f" />
      <Tool $w={38} $dim aria-label="마이크"><MicIcon /></Tool>
      <Level $color="#55402f" />
      <Tool $w={41} $dim aria-label="마우스 효과"><ClickIcon /></Tool>
      <ToolDivider />
      <Tool $w={44} $dim aria-label="텍스트"><TextIcon /></Tool>
      <ToolDivider />
      <PauseTool $w={40} aria-label="일시 정지"><PauseIcon /></PauseTool>
      <Tool $w={66} aria-label="녹화 정지"><RecIcon /></Tool>
      <Tool $w={36} aria-label="캡처"><CameraIcon /></Tool>
    </Toolbar>
    <SourceRow>
      <SelectionIcon />
      <SourceText>1920x1080 - (0, 0), (1920, 1080) - 디스플레이 1</SourceText>
      <Chevron up w={13} />
    </SourceRow>
    <Body>
      <Sidebar>
        <ul>
          {sideItems.map((item, i) => (
            <li key={item.label}><SideItem $active={i === 0}>{item.icon}{item.label}</SideItem></li>
          ))}
        </ul>
        <Bandicut href="#bandicut">
          <Brand $size={13} $color="#85888f">BANDI<Accent $color="#3d6ca8">CUT</Accent></Brand>
          <OutArrow />
        </Bandicut>
      </Sidebar>
      <Content>
        <Tabs>
          {tabs.map((t, i) => <Tab key={t} $active={i === 0}>{t}</Tab>)}
        </Tabs>
        <Modes>
          <Mode $back aria-label="뒤로"><ArrowBack /></Mode>
          {modes.map(m => <Mode key={m.name} $active={m.active} aria-label={m.name}>{m.icon}</Mode>)}
        </Modes>
        <Copy>
          <ModeTitle>화면 녹화 모드 - 전체 화면</ModeTitle>
          <Description>모니터 화면 전체를 녹화할 때 사용하는 방식입니다.</Description>
          <Steps>
            <li>1. 녹화대상 모니터(디스플레이)를 선택합니다.</li>
            <li>2. 녹화시작 단축키나 'REC' 버튼을 눌러 녹화를 시작합니다.</li>
          </Steps>
          <Actions>
            <StopButton><StopDisc />녹화 정지 하기</StopButton>
            <HelpLink href="#help">온라인 도움말 보기</HelpLink>
          </Actions>
          <Hotkeys>
            <div>
              <HotkeyLabel htmlFor="key-record"><KeyboardIcon />녹화 시작/정지</HotkeyLabel>
              <HotkeyInput id="key-record" defaultValue="F12" />
            </div>
            <div>
              <HotkeyLabel htmlFor="key-capture"><KeyboardIcon />이미지 캡처</HotkeyLabel>
              <HotkeyInput id="key-capture" defaultValue="F11" />
            </div>
          </Hotkeys>
        </Copy>
      </Content>
    </Body>
    <Tip><ChatIcon />하드웨어 가속으로 녹화 성능을 향상 시켜 보세요!</Tip>
  </Window>
);

export default function App() {
  return (
    <Screen>
      <GlobalStyle />
      <Desktop>
        <Slide>
          <SlideTitle>
            <TitleKorean>국방오픈소스아카데미</TitleKorean>
            Military-Mobility-Platform
          </SlideTitle>
          <SlideTeam>Team miliVision</SlideTeam>
        </Slide>
        <PageFold />
        <Watermark>www.<WatermarkName>BANDICAM</WatermarkName>.<WatermarkDomain>com</WatermarkDomain></Watermark>
        <RecorderWindow />
      </Desktop>
      <Taskbar>
        <StartButton aria-label="시작"><WindowsLogo /></StartButton>
        <Search>
          <SearchIcon />
          <SearchInput placeholder="검색하려면 여기에 입력하십시" aria-label="검색" />
          <Autumn />
        </Search>
        <StartButton aria-label="작업 보기"><TaskView /></StartButton>
        <Apps>
          {apps.map(a => <AppButton key={a.name} $state={a.state} aria-label={a.name}>{a.icon}</AppButton>)}
        </Apps>
        <Tray>
          <Weather><WeatherIcon />11°C&nbsp; 대체로 맑음</Weather>
          <TrayButton $w={20} aria-label="숨겨진 아이콘"><Chevron up /></TrayButton>
          <TrayButton aria-label="카메라"><MeetIcon /></TrayButton>
          <TrayButton aria-label="배터리"><BatteryIcon /></TrayButton>
          <TrayButton aria-label="클라우드"><CloudIcon /></TrayButton>
          <TrayButton aria-label="네트워크"><WifiIcon /></TrayButton>
          <TrayButton aria-label="볼륨"><MuteIcon /></TrayButton>
          <TrayButton aria-label="입력기"><Ime>A</Ime></TrayButton>
          <DateTime>오후 11:25<br />2022-10-21</DateTime>
          <Notifications aria-label="알림"><NoteIcon /><Badge>9</Badge></Notifications>
        </Tray>
      </Taskbar>
    </Screen>
  );
}
